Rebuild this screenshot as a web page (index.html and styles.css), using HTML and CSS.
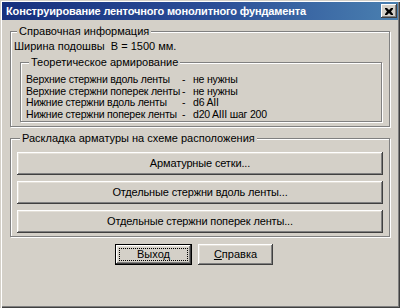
FILE: index.html
```html
<!DOCTYPE html>
<html lang="ru">
<head>
  <meta charset="UTF-8">
  <title>Конструирование ленточного монолитного фундамента</title>
  <link rel="stylesheet" href="styles.css">
</head>
<body>
  <div class="window">
    <!-- Title bar -->
    <div class="titlebar">
      <span class="title">Конструирование ленточного монолитного фундамента</span>
      <button class="close" type="button">
        <svg width="8" height="7" viewBox="0 0 8 7">
          <path d="M0 0h2l2 2 2-2h2v1L6 3.5 8 6v1H6L4 5 2 7H0V6l2-2.5L0 1z" fill="#000"/>
        </svg>
      </button>
    </div>

    <!-- Reference info -->
    <fieldset class="group">
      <legend>Справочная информация</legend>
      <div class="line">Ширина подошвы&nbsp; В = 1500 мм.</div>

      <fieldset class="group inner">
        <legend>Теоретическое армирование</legend>
        <div class="rebar">
          <span>Верхние стержни вдоль ленты</span><span>-</span><span>не нужны</span>
          <span>Верхние стержни поперек ленты</span><span>-</span><span>не нужны</span>
          <span>Нижние стержни вдоль ленты</span><span>-</span><span>d6 AII</span>
          <span>Нижние стержни поперек ленты</span><span>-</span><span>d20 AIII шаг 200</span>
        </div>
      </fieldset>
    </fieldset>

    <!-- Layout of reinforcement -->
    <fieldset class="group layout">
      <legend>Раскладка арматуры на схеме расположения</legend>
      <button class="btn wide" type="button">Арматурные сетки...</button>
      <button class="btn wide" type="button">Отдельные стержни вдоль ленты...</button>
      <button class="btn wide" type="button">Отдельные стержни поперек ленты...</button>
    </fieldset>

    <div class="actions">
      <button class="btn default" type="button"><span class="focus">Выход</span></button>
      <button class="btn" type="button"><u>С</u>правка</button>
    </div>
  </div>
</body>
</html>
```

FILE: styles.css
```css
/* Classic dialog */
body {
  margin: 0;
  background: #d4d0c8;
  font-family: "Liberation Sans", Arial, sans-serif;
  font-size: 11px;
  color: #000;
}

.window {
  box-sizing: border-box;
  width: 400px;
  height: 308px;
  padding: 2px;
  background: #d4d0c8;
  box-shadow: inset 1px 1px 0 #d4d0c8, inset 2px 2px 0 #fff,
              inset -1px -1px 0 #404040, inset -2px -2px 0 #808080;
  display: flex;
  flex-direction: column;
}

/* Title bar */
.titlebar {
  height: 18px;
  display: flex;
  align-items: center;
  justify-content: space-between;
  padding: 0 1px 0 4px;
  background: linear-gradient(to right, #16307e, #2c4f98 55%, #4a80b0);
}

.title {
  color: #fff;
  font-weight: bold;
  font-size: 11px;
  letter-spacing: -0.15px;
}

.close {
  box-sizing: border-box;
  width: 16px;
  height: 14px;
  padding: 0;
  border: 0;
  background: #d4d0c8;
  display: flex;
  align-items: center;
  justify-content: center;
  box-shadow: inset -1px -1px 0 #404040, inset 1px 1px 0 #fff,
              inset -2px -2px 0 #808080;
}

/* Group boxes */
.group {
  margin: 5px 8px 0;
  padding: 2px 3px 4px;
  min-inline-size: 0;
  border: 1px solid #808080;
  box-shadow: 1px 1px 0 #fff, inset 1px 1px 0 #fff;
  line-height: 13px;
}

.group legend {
  margin-left: 3px;
  padding: 0 2px;
  background: #d4d0c8;
  position: relative;
}

.line {
  height: 13px;
}

.inner {
  margin: 3px 4px 0 6px;
  padding: 5px 5px 0;
}

.rebar {
  display: grid;
  grid-template-columns: 156px 11px auto;
  line-height: 11.7px;
  white-space: nowrap;
  font-size: 10.5px;
  letter-spacing: -0.2px;
}

/* Buttons */
.btn {
  box-sizing: border-box;
  width: 75px;
  height: 21px;
  padding: 0;
  border: 0;
  background: #d4d0c8;
  font-family: inherit;
  font-size: 11px;
  color: #000;
  box-shadow: inset -1px -1px 0 #404040, inset 1px 1px 0 #fff,
              inset -2px -2px 0 #808080, inset 2px 2px 0 #e4e0d8;
}

.layout {
  display: flex;
  flex-direction: column;
  gap: 6px;
  padding: 7px 6px 3px;
}

.btn.wide {
  width: 100%;
  height: 23px;
  letter-spacing: -0.15px;
}

.actions {
  display: flex;
  justify-content: center;
  gap: 6px;
  margin-top: 7px;
  padding-right: 12px;
}

.btn.default {
  width: 77px;
  border: 1px solid #000;
  display: flex;
  align-items: center;
  justify-content: center;
  padding: 3px;
}

.focus {
  flex: 1;
  align-self: stretch;
  display: flex;
  align-items: center;
  justify-content: center;
  outline: 1px dotted #000;
  outline-offset: -1px;
}
```
